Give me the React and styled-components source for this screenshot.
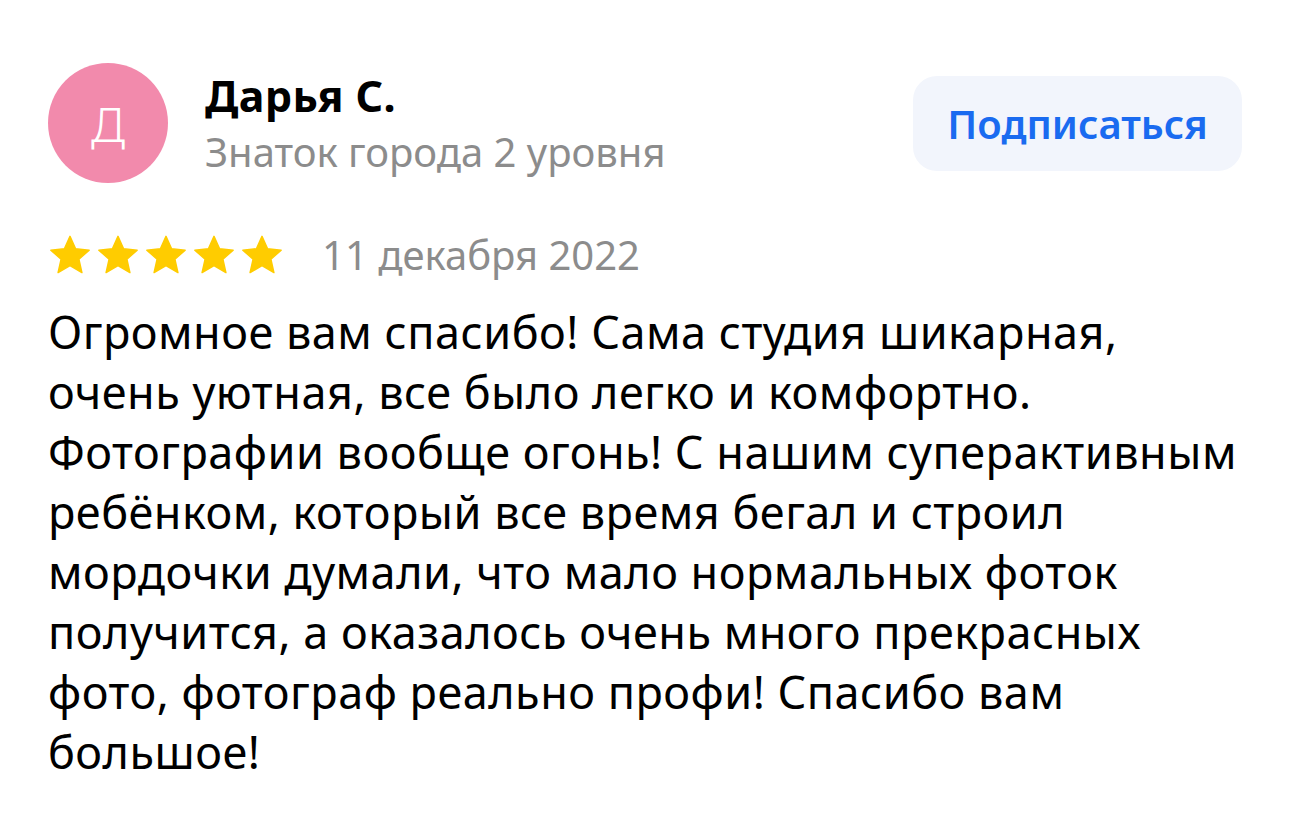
import React from "react";
import styled, { createGlobalStyle } from "styled-components";

const GlobalStyle = createGlobalStyle`
  html, body {
    margin: 0;
    padding: 0;
    background: #ffffff;
  }
  body {
    font-family: "Noto Sans", "Open Sans", sans-serif;
    -webkit-font-smoothing: antialiased;
  }
`;

const Review = styled.article`
  width: 1290px;
  height: 813px;
  box-sizing: border-box;
  padding: 63px 48px 0 48px;
  color: #000;
`;

const Header = styled.header`
  display: flex;
  align-items: flex-start;
`;

const Avatar = styled.div`
  width: 120px;
  height: 120px;
  border-radius: 50%;
  background: ${(p) => p.color};
  color: #fff;
  display: flex;
  align-items: center;
  justify-content: center;
  font-size: 48px;
  font-weight: 300;
  flex-shrink: 0;
`;

const Author = styled.div`
  display: flex;
  flex-direction: column;
  margin-left: 37px;
  padding-top: 7px;
  flex: 1;
`;

const Name = styled.div`
  font-size: 43px;
  font-weight: 700;
  line-height: 52px;
  letter-spacing: 0.4px;
`;

const Level = styled.div`
  font-size: 40px;
  line-height: 60px;
  color: #8c8c8c;
`;

const SubscribeButton = styled.button`
  margin-top: 13px;
  width: 329px;
  height: 95px;
  border: none;
  border-radius: 24px;
  background: #f2f5fc;
  color: #1a6bf0;
  font-family: inherit;
  font-size: 40px;
  font-weight: 600;
  cursor: pointer;
`;

const Meta = styled.div`
  display: flex;
  align-items: center;
  margin-top: 44px;
  gap: 38px;
`;

const Stars = styled.div`
  display: flex;
  gap: 4px;
`;

const Date = styled.span`
  font-size: 40px;
  color: #8c8c8c;
`;

const Text = styled.p`
  margin: 20px 0 0 0;
  font-size: 45px;
  line-height: 60px;
  letter-spacing: 0.5px;
  max-width: 1200px;
`;

const Star = () => (
  <svg width="44" height="44" viewBox="0 0 24 24">
    <path
      fill="#ffcc00"
      stroke="#ffcc00"
      strokeWidth="0.8"
      strokeLinejoin="round"
      d="M12 1.8l3.05 6.8 7.4.75-5.6 4.95 1.65 7.3L12 17.8l-6.5 3.8 1.65-7.3-5.6-4.95 7.4-.75z"
    />
  </svg>
);

export default function App() {
  return (
    <>
      <GlobalStyle />
      <Review>
        <Header>
          <Avatar color="#f28aac">Д</Avatar>
          <Author>
            <Name>Дарья С.</Name>
            <Level>Знаток города 2 уровня</Level>
          </Author>
          <SubscribeButton>Подписаться</SubscribeButton>
        </Header>
        <Meta>
          <Stars>
            {[0, 1, 2, 3, 4].map((i) => (
              <Star key={i} />
            ))}
          </Stars>
          <Date>11 декабря 2022</Date>
        </Meta>
        <Text>
          Огромное вам спасибо! Сама студия шикарная, очень уютная, все было
          легко и комфортно. Фотографии вообще огонь! С нашим суперактивным
          ребёнком, который все время бегал и строил мордочки думали, что мало
          нормальных фоток получится, а оказалось очень много прекрасных фото,
          фотограф реально профи! Спасибо вам большое!
        </Text>
      </Review>
    </>
  );
}
